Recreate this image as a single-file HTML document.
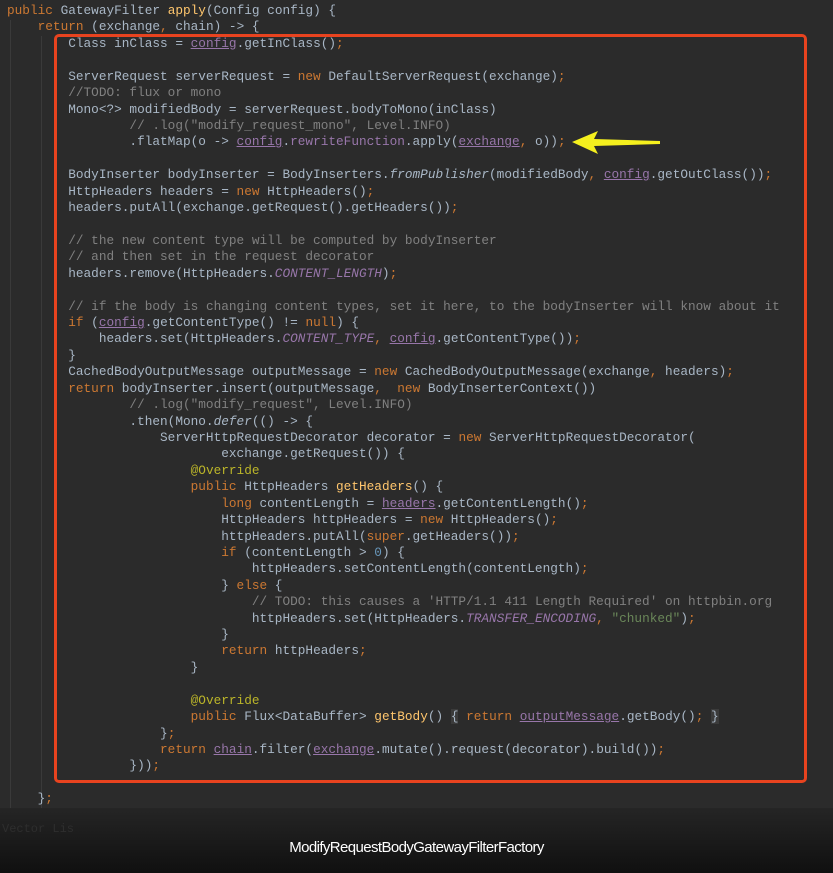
<!DOCTYPE html>
<html><head><meta charset="utf-8"><style>
html,body{margin:0;padding:0;}
body{width:833px;height:873px;background:#2b2b2b;position:relative;overflow:hidden;}
pre{position:absolute;left:7px;top:3px;margin:0;font-family:"Liberation Mono",monospace;font-size:12.75px;line-height:16.42px;color:#a9b7c6;white-space:pre;}
.k{color:#cc7832}.m{color:#ffc66d}.f{color:#9876aa;text-decoration:underline}.fp{color:#9876aa}.c{color:#808080}.a{color:#bbb529}.s{color:#6a8759}.n{color:#6897bb}.i{font-style:italic}.ic{color:#9876aa;font-style:italic}
.box{position:absolute;left:54px;top:34px;width:747px;height:743px;border:3px solid #e8431f;border-radius:5px;}
.foot{position:absolute;left:0;top:808px;width:833px;height:65px;background:linear-gradient(#252525,#101010);}
.cap{position:absolute;left:0;width:833px;top:839px;text-align:center;color:#fff;font-family:"Liberation Sans",sans-serif;font-size:15px;letter-spacing:-0.6px;}
.vec{position:absolute;left:2px;top:822px;color:#2e2e2e;font-family:"Liberation Mono",monospace;font-size:12px;}
.g{position:absolute;width:1px;background:#3a3a3a;}
</style></head><body>
<div class="g" style="left:10px;top:20px;height:788px"></div>
<div class="g" style="left:41px;top:36px;height:772px"></div>
<pre><span class="k">public</span> GatewayFilter <span class="m">apply</span>(Config config) {
    <span class="k">return</span> (exchange<span class="k">,</span> chain) -&gt; {
        Class inClass = <span class="f">config</span>.getInClass()<span class="k">;</span>

        ServerRequest serverRequest = <span class="k">new</span> DefaultServerRequest(exchange)<span class="k">;</span>
        <span class="c">//TODO: flux or mono</span>
        Mono&lt;?&gt; modifiedBody = serverRequest.bodyToMono(inClass)
                <span class="c">// .log("modify_request_mono", Level.INFO)</span>
                .flatMap(o -&gt; <span class="f">config</span>.<span class="fp">rewriteFunction</span>.apply(<span class="f">exchange</span><span class="k">,</span> o))<span class="k">;</span>

        BodyInserter bodyInserter = BodyInserters.<span class="i">fromPublisher</span>(modifiedBody<span class="k">,</span> <span class="f">config</span>.getOutClass())<span class="k">;</span>
        HttpHeaders headers = <span class="k">new</span> HttpHeaders()<span class="k">;</span>
        headers.putAll(exchange.getRequest().getHeaders())<span class="k">;</span>

        <span class="c">// the new content type will be computed by bodyInserter</span>
        <span class="c">// and then set in the request decorator</span>
        headers.remove(HttpHeaders.<span class="ic">CONTENT_LENGTH</span>)<span class="k">;</span>

        <span class="c">// if the body is changing content types, set it here, to the bodyInserter will know about it</span>
        <span class="k">if</span> (<span class="f">config</span>.getContentType() != <span class="k">null</span>) {
            headers.set(HttpHeaders.<span class="ic">CONTENT_TYPE</span><span class="k">,</span> <span class="f">config</span>.getContentType())<span class="k">;</span>
        }
        CachedBodyOutputMessage outputMessage = <span class="k">new</span> CachedBodyOutputMessage(exchange<span class="k">,</span> headers)<span class="k">;</span>
        <span class="k">return</span> bodyInserter.insert(outputMessage<span class="k">,</span>  <span class="k">new</span> BodyInserterContext())
                <span class="c">// .log("modify_request", Level.INFO)</span>
                .then(Mono.<span class="i">defer</span>(() -&gt; {
                    ServerHttpRequestDecorator decorator = <span class="k">new</span> ServerHttpRequestDecorator(
                            exchange.getRequest()) {
                        <span class="a">@Override</span>
                        <span class="k">public</span> HttpHeaders <span class="m">getHeaders</span>() {
                            <span class="k">long</span> contentLength = <span class="f">headers</span>.getContentLength()<span class="k">;</span>
                            HttpHeaders httpHeaders = <span class="k">new</span> HttpHeaders()<span class="k">;</span>
                            httpHeaders.putAll(<span class="k">super</span>.getHeaders())<span class="k">;</span>
                            <span class="k">if</span> (contentLength &gt; <span class="n">0</span>) {
                                httpHeaders.setContentLength(contentLength)<span class="k">;</span>
                            } <span class="k">else</span> {
                                <span class="c">// TODO: this causes a 'HTTP/1.1 411 Length Required' on httpbin.org</span>
                                httpHeaders.set(HttpHeaders.<span class="ic">TRANSFER_ENCODING</span><span class="k">,</span> <span class="s">"chunked"</span>)<span class="k">;</span>
                            }
                            <span class="k">return</span> httpHeaders<span class="k">;</span>
                        }

                        <span class="a">@Override</span>
                        <span class="k">public</span> Flux&lt;DataBuffer&gt; <span class="m">getBody</span>() <span style="background:#3b3b3b">{</span> <span class="k">return</span> <span class="f">outputMessage</span>.getBody()<span class="k">;</span> <span style="background:#3b3b3b">}</span>
                    }<span class="k">;</span>
                    <span class="k">return</span> <span class="f">chain</span>.filter(<span class="f">exchange</span>.mutate().request(decorator).build())<span class="k">;</span>
                }))<span class="k">;</span>

    }<span class="k">;</span></pre>
<div class="box"></div>
<svg style="position:absolute;left:570px;top:130px" width="95" height="26" viewBox="0 0 95 26"><polygon points="2,12 28,1 24,9 90,11 90,14 24,16 28,24" fill="#f5f01e"/></svg>
<div class="foot"></div>
<div class="vec">Vector  Lis</div>
<div class="cap">ModifyRequestBodyGatewayFilterFactory</div>
</body></html>
